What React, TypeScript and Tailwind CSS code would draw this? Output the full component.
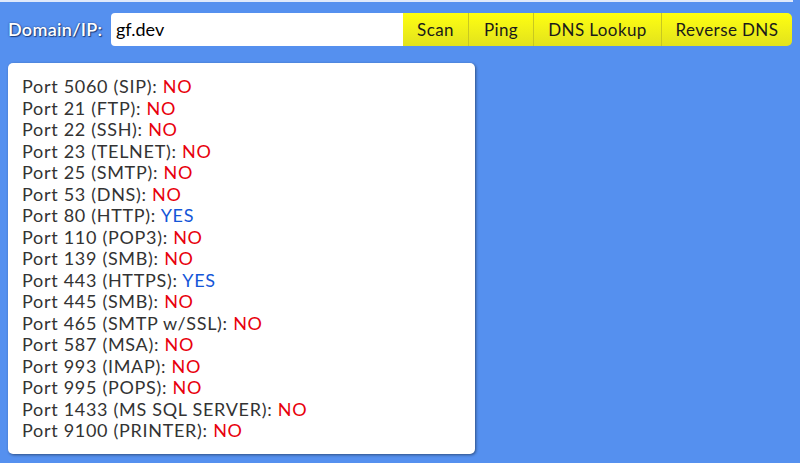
import React from "react";

const ports: [string, boolean][] = [
  ["Port 5060 (SIP): ", false],
  ["Port 21 (FTP): ", false],
  ["Port 22 (SSH): ", false],
  ["Port 23 (TELNET): ", false],
  ["Port 25 (SMTP): ", false],
  ["Port 53 (DNS): ", false],
  ["Port 80 (HTTP): ", true],
  ["Port 110 (POP3): ", false],
  ["Port 139 (SMB): ", false],
  ["Port 443 (HTTPS): ", true],
  ["Port 445 (SMB): ", false],
  ["Port 465 (SMTP w/SSL): ", false],
  ["Port 587 (MSA): ", false],
  ["Port 993 (IMAP): ", false],
  ["Port 995 (POPS): ", false],
  ["Port 1433 (MS SQL SERVER): ", false],
  ["Port 9100 (PRINTER): ", false],
];

export default function App() {
  return (
    <div
      className="w-[800px] h-[463px] bg-[#5590ef] overflow-hidden relative"
      style={{ fontFamily: "Lato, 'Open Sans', sans-serif" }}
    >
      <div className="h-[2px] w-[793px] bg-[#dfe9fb]" />
      <div className="flex items-center pl-[8px] pt-[10px] h-[45px]">
        <label className="text-white text-[18px] font-semibold tracking-[0.3px] w-[103px] [text-shadow:0_0_2px_#1c3f80,1px_1px_1px_#1c3f80]">
          Domain/IP:
        </label>
        <div className="w-[292px] h-[33px] bg-white rounded-l-[4px] flex items-center pl-[5px] text-[18px] text-black">
          gf.dev
        </div>
        <div className="flex h-[33px] rounded-r-[5px] overflow-hidden bg-gradient-to-b from-[#ffff10] to-[#e2e21c] text-[#1a1a1a] text-[17px] tracking-[0.4px]">
          <button className="w-[66px] flex items-center justify-center border-r border-[#c8c820]">Scan</button>
          <button className="w-[65px] flex items-center justify-center border-r border-[#c8c820]">Ping</button>
          <button className="w-[128px] flex items-center justify-center border-r border-[#c8c820]">DNS Lookup</button>
          <button className="w-[130px] flex items-center justify-center">Reverse DNS</button>
        </div>
      </div>
      <div className="ml-[8px] mt-[16px] w-[467px] h-[391px] bg-white rounded-[5px] shadow-[1px_1px_3px_rgba(0,0,0,0.45)] pl-[14px] pt-[13px] text-[18px] leading-[21.5px] text-[#333] tracking-[0.7px]">
        {ports.map(([label, open], i) => (
          <div key={i}>
            {label}
            <span className={open ? "text-[#1456d8]" : "text-[#e8000c]"}>{open ? "YES" : "NO"}</span>
          </div>
        ))}
      </div>
    </div>
  );
}
